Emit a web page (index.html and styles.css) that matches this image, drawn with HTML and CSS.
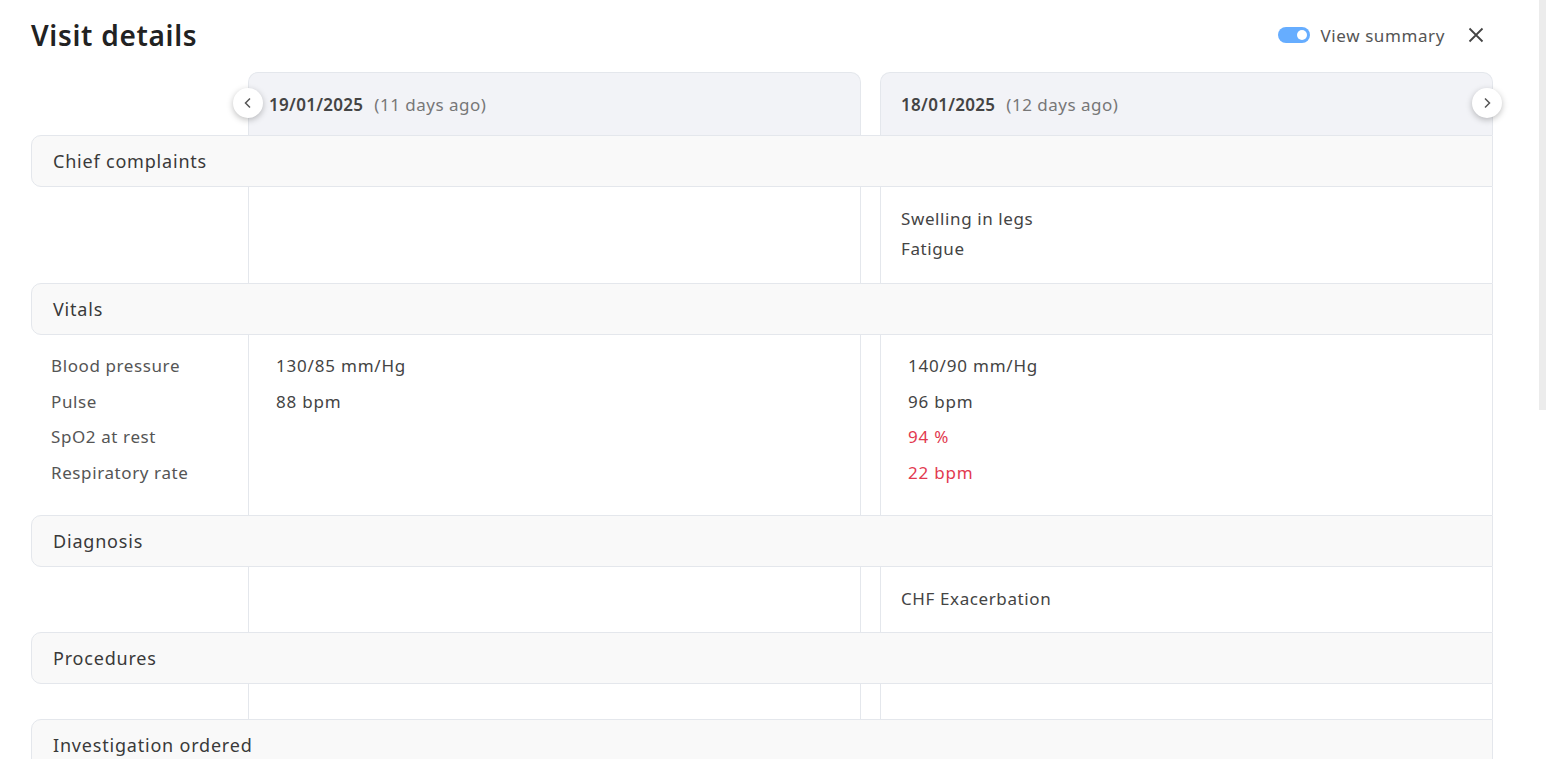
FILE: index.html
```html
<!DOCTYPE html>
<html lang="en">
<head>
  <meta charset="UTF-8">
  <title>Visit details</title>
  <link rel="stylesheet" href="styles.css">
</head>
<body>

  <div class="pagina">
    <div class="cabecera">
      <h1>Visit details</h1>
      <div class="acciones">
        <span class="interruptor"><span class="perilla"></span></span>
        <span class="ver-resumen">View summary</span>
        <svg class="cerrar" width="16" height="16" viewBox="0 0 16 16">
          <path d="M1.5 1.5 L14.5 14.5 M14.5 1.5 L1.5 14.5" stroke="#444" stroke-width="1.8" fill="none"/>
        </svg>
      </div>
    </div>

    <div class="tabla">
      <div class="fila-fechas">
        <div></div>
        <div class="fecha">
          <button class="flecha flecha-izq" title="Anterior">
            <svg width="14" height="14" viewBox="0 0 14 14"><path d="M9 2.5 L4.5 7 L9 11.5" stroke="#555" stroke-width="1.5" fill="none"/></svg>
          </button>
          <strong>19/01/2025</strong> <span class="hace">(11 days ago)</span>
        </div>
        <div></div>
        <div class="fecha">
          <strong>18/01/2025</strong> <span class="hace">(12 days ago)</span>
          <button class="flecha flecha-der" title="Siguiente">
            <svg width="14" height="14" viewBox="0 0 14 14"><path d="M5 2.5 L9.5 7 L5 11.5" stroke="#555" stroke-width="1.5" fill="none"/></svg>
          </button>
        </div>
      </div>

      <!-- Chief complaints -->
      <div class="seccion">Chief complaints</div>
      <div class="cuerpo alto-quejas">
        <div></div>
        <div class="celda"></div>
        <div></div>
        <div class="celda lista">
          <p>Swelling in legs</p>
          <p>Fatigue</p>
        </div>
      </div>

      <!-- Vitals -->
      <div class="seccion">Vitals</div>
      <div class="cuerpo alto-vitales">
        <div class="etiquetas">
          <p>Blood pressure</p>
          <p>Pulse</p>
          <p>SpO2 at rest</p>
          <p>Respiratory rate</p>
        </div>
        <div class="celda valores">
          <p>130/85 mm/Hg</p>
          <p>88 bpm</p>
        </div>
        <div></div>
        <div class="celda valores">
          <p>140/90 mm/Hg</p>
          <p>96 bpm</p>
          <p class="alerta">94 %</p>
          <p class="alerta">22 bpm</p>
        </div>
      </div>

      <!-- Diagnosis -->
      <div class="seccion">Diagnosis</div>
      <div class="cuerpo alto-diag">
        <div></div>
        <div class="celda"></div>
        <div></div>
        <div class="celda lista">
          <p>CHF Exacerbation</p>
        </div>
      </div>

      <!-- Procedures -->
      <div class="seccion">Procedures</div>
      <div class="cuerpo alto-proc">
        <div></div>
        <div class="celda"></div>
        <div></div>
        <div class="celda"></div>
      </div>

      <div class="seccion">Investigation ordered</div>
      <div class="cuerpo alto-proc">
        <div></div>
        <div class="celda"></div>
        <div></div>
        <div class="celda"></div>
      </div>
    </div>
  </div>

  <div class="barra-scroll"></div>

</body>
</html>
```

FILE: styles.css
```css
* {
  box-sizing: border-box;
}

body {
  font-family: "Noto Sans", "Open Sans", sans-serif;
  background-color: #ffffff;
  color: #444;
  margin: 0;
  overflow: hidden;
}

p {
  margin: 0;
}

.pagina {
  padding: 0 53px 0 31px;
}

.cabecera {
  display: flex;
  align-items: center;
  justify-content: space-between;
  height: 70px;
  padding-right: 9px;
}

h1 {
  margin: 0;
  font-size: 28px;
  font-weight: 600;
  color: #222;
  letter-spacing: 0.7px;
}

.acciones {
  display: flex;
  align-items: center;
}

.interruptor {
  display: inline-block;
  width: 32px;
  height: 16px;
  border-radius: 8px;
  background-color: #66adff;
  position: relative;
}

.perilla {
  position: absolute;
  right: 3px;
  top: 3px;
  width: 10px;
  height: 10px;
  border-radius: 50%;
  background-color: white;
}

.ver-resumen {
  margin-left: 11px;
  font-size: 17px;
  letter-spacing: 0.6px;
  color: #555;
}

.cerrar {
  margin-left: 23px;
}

.tabla {
  width: 1462px;
}

.fila-fechas,
.cuerpo {
  display: grid;
  grid-template-columns: 217px 613px 19px 613px;
}

.fila-fechas {
  margin-top: 2px;
}

.fecha {
  position: relative;
  height: 63px;
  display: flex;
  align-items: center;
  padding-left: 20px;
  background-color: #f2f3f7;
  border: 1px solid #e4e7ec;
  border-bottom: none;
  border-radius: 10px 10px 0 0;
  font-size: 17px;
  color: #444;
}

.fecha strong {
  font-weight: 600;
  letter-spacing: 0.3px;
  margin-right: 11px;
}

.hace {
  color: #777;
  letter-spacing: 0.5px;
}

.flecha {
  position: absolute;
  top: 15px;
  width: 30px;
  height: 30px;
  border-radius: 50%;
  border: none;
  background-color: white;
  box-shadow: 0 2px 6px rgba(0, 0, 0, 0.25);
  display: flex;
  align-items: center;
  justify-content: center;
  padding: 0;
  z-index: 2;
}

.flecha-izq {
  left: -16px;
}

.flecha-der {
  right: -10px;
}

.seccion {
  height: 52px;
  display: flex;
  align-items: center;
  padding-left: 21px;
  background-color: #f9f9f9;
  border: 1px solid #e4e7ec;
  border-radius: 10px 0 0 10px;
  font-size: 18px;
  font-weight: 400;
  letter-spacing: 0.8px;
  color: #3a3a3a;
}

.celda {
  border-left: 1px solid #e4e7ec;
  border-right: 1px solid #e4e7ec;
}

.alto-quejas {
  height: 96px;
}

.alto-vitales {
  height: 180px;
}

.alto-diag {
  height: 65px;
}

.alto-proc {
  height: 35px;
}

.lista {
  padding: 17px 0 0 20px;
  font-size: 17px;
  letter-spacing: 0.6px;
  line-height: 30px;
}

.etiquetas,
.valores {
  padding-top: 13px;
  line-height: 35.5px;
}

.etiquetas {
  padding-left: 20px;
  font-size: 17px;
  letter-spacing: 0.6px;
  color: #555;
}

.valores {
  padding-left: 27px;
  font-size: 17px;
  letter-spacing: 0.8px;
  color: #444;
}

.alerta {
  color: #e23a50;
}

.barra-scroll {
  position: fixed;
  top: 0;
  right: 0;
  width: 7px;
  height: 410px;
  background-color: #ececec;
}
```
